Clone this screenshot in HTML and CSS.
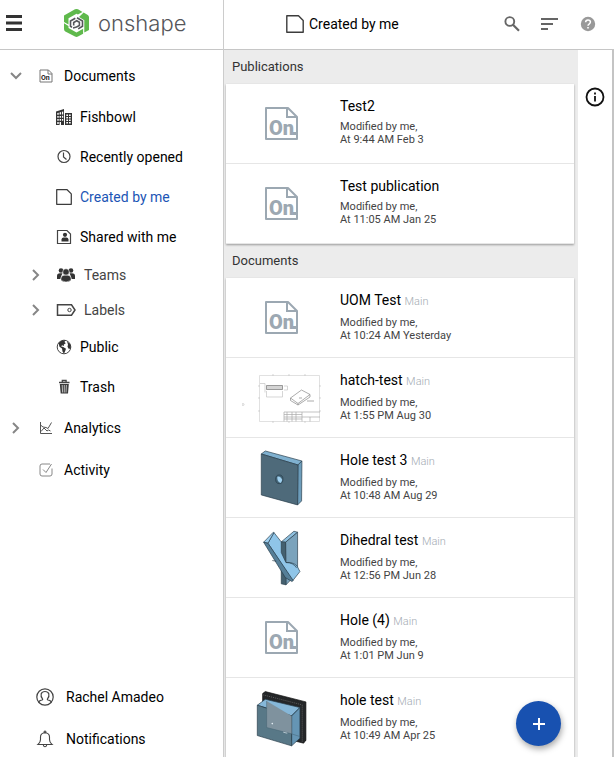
FILE: index.html
```html
<!DOCTYPE html>
<html lang="en">
<head>
<meta charset="utf-8">
<meta name="viewport" content="width=device-width, initial-scale=1">
<title>Onshape - Created by me</title>
<link rel="stylesheet" href="styles.css">
</head>
<body>
<svg class="sprite" aria-hidden="true">
  <symbol id="chevron" viewBox="0 0 16 16"><path d="M5 3l5 5-5 5" fill="none" stroke="#868686" stroke-width="2"/></symbol>
  <symbol id="page" viewBox="0 0 18 18"><path d="M.8.8h11.700l4.700 4.700v11.700H.8z" fill="none" stroke="#3c3c3c" stroke-width="1.400" stroke-linejoin="round"/></symbol>
  <symbol id="on-doc" viewBox="0 0 80 60">
    <path d="M24 14h22l9 9v22H24z" fill="none" stroke="#9ca8b2" stroke-width="2" stroke-linejoin="round"/>
    <path d="M45 14v9h10" fill="none" stroke="#9ca8b2" stroke-width="2"/>
    <text x="27" y="41" class="on-text">On</text>
    <path d="M51 39.500h4" stroke="#9ca8b2" stroke-width="3"/>
  </symbol>
</svg>
<div class="app">
  <aside class="sidebar">
    <header class="brand">
      <button class="icon-button menu" type="button" aria-label="Menu">
        <svg width="16" height="16" viewBox="0 0 16 16"><path d="M0 1.500h16M0 8h16M0 14.500h16" stroke="#333" stroke-width="2.800"/></svg>
      </button>
      <a class="logo" href="#">
        <svg width="25" height="29" viewBox="0 0 25 29">
          <g fill="#5fb94c">
            <path d="M0 6.500L11 .3q1.500-.6 3 0l4.500 2.600-4.600 2.700-1.400-.8L4.500 9.300v6.200L0 12.900z"/>
            <path d="M19.600 3.600l4.200 2.400q1.200.8 1.200 2.300v12.600l-4.700 2.700V11.300l-5.300-3.200z"/>
            <path d="M0 14.300l4.500 2.600v2l8 4.600 6.600-3.700v4.900l-5.100 2.900q-1.500.6-3 0L1.300 22.400Q0 21.600 0 20z"/>
          </g>
          <path d="M8 18.300l-1.500-.9V12l4.800-2.800M13 8.800l5.500 3.200v5.300l-4.300 2.600M9.700 16.500v-3l3-1.800 2.700 1.600v3.200L12.500 18l-3.500 1" fill="none" stroke="#55565a" stroke-width="1.600"/>
        </svg>
        <span class="wordmark">onshape</span>
      </a>
    </header>
    <nav class="nav" aria-label="Library">
      <a class="item top" href="#">
        <svg class="chev open" width="16" height="16"><use href="#chevron"/></svg>
        <svg width="16" height="16" viewBox="0 0 16 16"><path d="M2 2h8.500L14 5.500V14H2zM10 2v4h4" fill="none" stroke="#777"/><text x="3" y="12" class="on-small">On</text></svg>
        <span>Documents</span>
      </a>
      <a class="item sub" href="#">
        <svg width="16" height="16" viewBox="0 0 16 16"><path fill-rule="evenodd" d="M0 2.500L8 0v16H0zM1.300 4v1.800h1.400V3.700zM3.600 3.400v2.200h1.400V3zM5.900 2.800v2.600h1.300v-3zM1.300 7v1.800h1.400V7zM3.600 7v1.800H5V7zM5.900 6.800v2h1.300v-2zM1.300 10v1.800h1.400V10zM3.600 10v1.800H5V10zM5.900 10v1.800h1.300V10zM1.300 13v2h1.400v-2zM3.600 13v3H5v-3zM9 4h7v12H9zM10.300 5.500v1.400h1.700V5.500zM13 5.500v1.400h1.700V5.500zM10.300 8v1.400h1.700V8zM13 8v1.400h1.700V8zM10.300 10.500v1.400h1.700v-1.400zM13 10.500v1.400h1.700v-1.400zM10.300 13v1.400h1.700V13zM13 13v1.400h1.700V13z" fill="#333"/></svg>
        <span>Fishbowl</span>
      </a>
      <a class="item sub" href="#">
        <svg width="16" height="16" viewBox="0 0 16 16"><circle cx="8" cy="7.500" r="6" fill="none" stroke="#444" stroke-width="1.200"/><path d="M7.500 3.500V8l3 2.500" fill="none" stroke="#444" stroke-width="1.200"/></svg>
        <span>Recently opened</span>
      </a>
      <a class="item sub current" href="#" aria-current="page">
        <svg width="16" height="16"><use href="#page"/></svg>
        <span>Created by me</span>
      </a>
      <a class="item sub" href="#">
        <svg width="16" height="16" viewBox="0 0 16 16"><path d="M1.500 1.500h9.500L14.500 5v9.500h-13z" fill="none" stroke="#444" stroke-width="1.200"/><circle cx="9" cy="5.800" r="2.100" fill="#333"/><path d="M5.500 12.500V10.500q.2-1.800 2-2h3q1.800.2 2 2v2z" fill="#333"/></svg>
        <span>Shared with me</span>
      </a>
      <a class="item group" href="#">
        <svg class="chev" width="16" height="16"><use href="#chevron"/></svg>
        <svg width="20" height="16" viewBox="0 0 20 16"><g fill="#333"><circle cx="5" cy="3.500" r="2.300"/><circle cx="15" cy="3.500" r="2.300"/><path d="M1 12V9q0-2.800 3-2.800h2.500L5 9.500 4.500 12zM19 12V9q0-2.800-3-2.800h-2.500L15 9.500l.5 2.500z"/><circle cx="10" cy="5" r="3.300" stroke="#fff" stroke-width=".6"/><path d="M5 13.500V11q.3-2.600 3-2.800h4q2.700.2 3 2.800v2.500Q10 16.500 5 13.500z" stroke="#fff" stroke-width=".5"/></g></svg>
        <span>Teams</span>
      </a>
      <a class="item group" href="#">
        <svg class="chev" width="16" height="16"><use href="#chevron"/></svg>
        <svg width="20" height="16" viewBox="0 0 20 16"><path d="M1.500 2.800h14L19 8l-3.500 5.200h-14z" fill="none" stroke="#444" stroke-width="1.500"/><circle cx="13.500" cy="8" r="1.700" fill="none" stroke="#444"/></svg>
        <span>Labels</span>
      </a>
      <a class="item sub" href="#">
        <svg width="16" height="16" viewBox="0 0 16 16"><circle cx="8" cy="8" r="6.800" fill="#fff" stroke="#444"/><path d="M2.500 4Q5 1 9.500 1.300L8.500 3l1.300 1.200-2 1.300.2 1.500-2-.8-.8 1.200 2 .5 2.800 1.800-.8 2.200-1.200 2.800-1.500-2.300L6 9.500 3.500 7.800zM11 2.300l3.300 3.200.5 3-1.800 1.700-1.500-2.500.5-2z" fill="#333"/></svg>
        <span>Public</span>
      </a>
      <a class="item sub" href="#">
        <svg width="16" height="16" viewBox="0 0 16 16"><path d="M3 3.500h10.500M6.300 3V1.500h3.800V3" fill="none" stroke="#444" stroke-width="1.300"/><path d="M3.800 5h9l-.8 9.500H4.700z" fill="#3a3a3a"/><path d="M6.200 6l.4 7.500M8.300 6v7.500M10.400 6L10 13.500" stroke="#bbb"/></svg>
        <span>Trash</span>
      </a>
      <a class="item top" href="#">
        <svg class="chev" width="16" height="16"><use href="#chevron"/></svg>
        <svg width="16" height="16" viewBox="0 0 16 16"><path d="M2.500 2v11.500H14" fill="none" stroke="#555"/><path d="M2.500 5l2.500 2 3 .5 2 1 3.500-6M3 11.500l3-3.500 3 3 1.500-1 2 1" fill="none" stroke="#555"/></svg>
        <span>Analytics</span>
      </a>
      <a class="item top" href="#">
        <span class="chev-space"></span>
        <svg width="16" height="16" viewBox="0 0 16 16"><path d="M12 2H4Q2 2 2 4v8q0 2 2 2h8q2 0 2-2V6.500M5 7.500L8 10.500l5.500-8.500" fill="none" stroke="#888"/></svg>
        <span>Activity</span>
      </a>
    </nav>
    <div class="account">
      <a class="item" href="#">
        <svg width="18" height="18" viewBox="0 0 18 18"><circle cx="9" cy="9" r="8.200" fill="none" stroke="#444" stroke-width="1.200"/><path d="M3 15v-1.500q1-1.200 3-1.500 1-.3.500-1.200Q4.500 8.500 5.200 5.800 6 3.500 9 3.500t3.800 2.300q.7 2.700-1.300 5-.5.900.5 1.200 2 .3 3 1.500V15" fill="none" stroke="#444" stroke-width="1.200"/></svg>
        <span>Rachel Amadeo</span>
      </a>
      <a class="item" href="#">
        <svg width="18" height="18" viewBox="0 0 18 18"><path d="M2 14.500h14q-2.500-2-2.500-5V7q0-4-4.500-4.300Q4.500 3 4.500 7v2.500q0 3-2.500 5zM8 2.500Q8 1 9 1t1 1.500M7.300 15q.4 1.800 1.700 1.800t1.700-1.800" fill="none" stroke="#444" stroke-width="1.100"/></svg>
        <span>Notifications</span>
      </a>
    </div>
  </aside>

  <main class="main">
    <header class="bar">
      <h1 class="page-title"><svg width="18" height="18"><use href="#page"/></svg>Created by me</h1>
      <div class="actions">
        <button class="icon-button" type="button" aria-label="Search"><svg width="18" height="18" viewBox="0 0 18 18"><circle cx="6.800" cy="6.500" r="4.400" fill="none" stroke="#666" stroke-width="1.900"/><path d="M10 9.700l6 6" stroke="#666" stroke-width="2.200"/></svg></button>
        <button class="icon-button" type="button" aria-label="Sort"><svg width="18" height="18" viewBox="0 0 18 18"><path d="M0 4h17M0 9h12M0 14h7" stroke="#333" stroke-width="1.700"/></svg></button>
        <button class="icon-button" type="button" aria-label="Help"><svg width="16" height="16" viewBox="0 0 16 16"><circle cx="8" cy="8" r="7.200" fill="#999"/><path d="M5.600 6.300Q5.700 3.900 8 3.900t2.400 2Q10.400 7 9.300 7.800 8 8.600 8 9.800" fill="none" stroke="#fff" stroke-width="1.500"/><path d="M7.200 10.900h1.600v1.500H7.200z" fill="#fff"/></svg></button>
      </div>
    </header>
    <div class="content">
      <div class="list">
        <section>
          <h2 class="section-title">Publications</h2>
          <div class="cards">
            <a class="card" href="#">
              <svg class="thumb" viewBox="0 0 80 60"><use href="#on-doc"/></svg>
              <div><h3 class="name">Test2</h3><p class="meta">Modified by me,<br>At 9:44 AM Feb 3</p></div>
            </a>
            <a class="card" href="#">
              <svg class="thumb" viewBox="0 0 80 60"><use href="#on-doc"/></svg>
              <div><h3 class="name">Test publication</h3><p class="meta">Modified by me,<br>At 11:05 AM Jan 25</p></div>
            </a>
          </div>
        </section>
        <section>
          <h2 class="section-title">Documents</h2>
          <div class="cards">
            <a class="card" href="#">
              <svg class="thumb" viewBox="0 0 80 60"><use href="#on-doc"/></svg>
              <div><h3 class="name">UOM Test <small>Main</small></h3><p class="meta">Modified by me,<br>At 10:24 AM Yesterday</p></div>
            </a>
            <a class="card" href="#">
              <svg class="thumb" viewBox="0 0 80 60">
                <g fill="none" stroke="#c4c4c4" stroke-width=".7">
                  <path d="M17.500 7.500h60v46h-60z" stroke="#d4d4d4"/>
                  <path d="M31 6v2M47 6v2M63 6v2M31 53v2M47 53v2M63 53v2M16 18h2M16 30h2M16 43h2M77 18h2M77 30h2M77 43h2"/>
                  <circle cx="1" cy="36.500" r="1"/>
                  <path d="M24.500 23v6h16v-6M42 18h3.500v4H42M18 15.500h5v9"/>
                  <path d="M42 44h36M42 46.500h18M42 49h36M42 51h18M45 44v9.500M50 44v9.500M54 44v9.500M60 44v9.500M68 49v4.500M42 44v9.500" stroke="#aaa"/>
                </g>
                <path d="M24.500 17.500h16v4h-16z" fill="#d4d4d4" stroke="#777" stroke-width=".7"/>
                <path d="M48.500 30l11-8 8.500 4.500-12 9zM48.500 30v2.500l7.500 4.500 12-8v-2.500M56 35.500V37M57 30h3M65 33h7" fill="none" stroke="#888" stroke-width=".7"/>
              </svg>
              <div><h3 class="name">hatch-test <small>Main</small></h3><p class="meta">Modified by me,<br>At 1:55 PM Aug 30</p></div>
            </a>
            <a class="card" href="#">
              <svg class="thumb" viewBox="0 0 80 60">
                <g transform="translate(-18 -12) scale(.333)" stroke="#263b48" stroke-width="2" stroke-linejoin="round">
                  <path d="M112 54l12-9 110 30-12 12z" fill="#7fb0cf"/>
                  <path d="M222 87l12-12-1 120-12 12z" fill="#6d9dbb"/>
                  <path d="M112 54l110 33-1 120-109-30z" fill="#4e6a7a"/>
                  <ellipse cx="166" cy="130" rx="11" ry="13" fill="#456577"/>
                  <path d="M160 122q10-3 15 10l-4 9q-12-3-11-19z" fill="#9fd0ef" stroke="none"/>
                </g>
              </svg>
              <div><h3 class="name">Hole test 3 <small>Main</small></h3><p class="meta">Modified by me,<br>At 10:48 AM Aug 29</p></div>
            </a>
            <a class="card" href="#">
              <svg class="thumb" viewBox="0 0 80 60">
                <g transform="translate(-18 -92) scale(.333)" stroke="#263b48" stroke-width="2" stroke-linejoin="round">
                  <path d="M172 318l38-32 11 3-36 30z" fill="#8fc0df"/>
                  <path d="M185 319l36-30v122l-35 36z" fill="#7ba3bc"/>
                  <path d="M172 318l13 1 1 128-14-3z" fill="#44606f"/>
                  <path d="M132 322l18-32 22 28v32l14 30q20-2 33 10l9 17-22 28z" fill="#8fc5e8"/>
                  <path d="M119 319l29-30 2 1-18 32z" fill="#9dcff0"/>
                  <path d="M119 319l13 3 76 112-4 3-20-12z" fill="#567f98"/>
                  <path d="M186 380q22 0 32 16M145 374l12 2" fill="none"/>
                </g>
              </svg>
              <div><h3 class="name">Dihedral test <small>Main</small></h3><p class="meta">Modified by me,<br>At 12:56 PM Jun 28</p></div>
            </a>
            <a class="card" href="#">
              <svg class="thumb" viewBox="0 0 80 60"><use href="#on-doc"/></svg>
              <div><h3 class="name">Hole (4) <small>Main</small></h3><p class="meta">Modified by me,<br>At 1:01 PM Jun 9</p></div>
            </a>
            <a class="card" href="#">
              <svg class="thumb" viewBox="0 0 80 60">
                <g transform="translate(-18 -87) scale(.333)" stroke-linejoin="round">
                  <path d="M116 278l8-6 122 31v115l-7 9-123-31z" fill="#242628" stroke="#111" stroke-width="2"/>
                  <path d="M118 282l117 30v112" fill="none" stroke="#777" stroke-width="2" stroke-dasharray="3 3"/>
                  <path d="M100 313l24-18 104 25-25 25z" fill="#86b7d8" stroke="#263b48" stroke-width="2"/>
                  <path d="M203 345l25-25v92l-25 23z" fill="#6595b4" stroke="#263b48" stroke-width="2"/>
                  <path d="M100 313l103 32v90l-103-31z" fill="#587887" stroke="#263b48" stroke-width="2"/>
                  <path d="M128 300l75 45v54l-75-19z" fill="#7f929e"/>
                  <path d="M128 300v80l75 19 25 8" fill="none" stroke="#456373" stroke-width="1.500"/>
                  <circle cx="145" cy="368" r="2.500" fill="#e3edf3"/><path d="M178 394l12 3" stroke="#e3edf3" stroke-width="2"/>
                </g>
              </svg>
              <div><h3 class="name">hole test <small>Main</small></h3><p class="meta">Modified by me,<br>At 10:49 AM Apr 25</p></div>
            </a>
          </div>
        </section>
        <button class="create" type="button" aria-label="Create"><svg width="12" height="12" viewBox="0 0 12 12"><path d="M6 0v12M0 6h12" stroke="#fff" stroke-width="2"/></svg></button>
      </div>
      <aside class="rail">
        <button class="icon-button" type="button" aria-label="Details"><svg width="20" height="20" viewBox="0 0 20 20"><circle cx="10" cy="10" r="8.500" fill="none" stroke="#111" stroke-width="1.800"/><path d="M10 9v5.500M10 5.500v2" stroke="#111" stroke-width="1.800"/></svg></button>
      </aside>
    </div>
  </main>
</div>
</body>
</html>
```
FILE: styles.css
```css
* {
  box-sizing: border-box;
}

body {
  margin: 0;
  font-family: Roboto, "Liberation Sans", sans-serif;
  font-size: 14px;
  line-height: 18px;
  color: #000;
  background: #fff;
}

a {
  color: inherit;
  text-decoration: none;
}

h1, h2, h3, p {
  margin: 0;
  font-weight: 400;
}

svg {
  display: block;
  flex: none;
}

.sprite {
  display: none;
}

.app {
  display: grid;
  grid-template-columns: 224px minmax(0, 1fr);
  height: 100vh;
  overflow: hidden;
}

.icon-button {
  display: flex;
  align-items: center;
  justify-content: center;
  padding: 0;
  border: 0;
  background: none;
}

/* Sidebar */
.sidebar {
  display: flex;
  flex-direction: column;
  border-right: 1px solid #ccc;
}

.brand,
.bar {
  display: flex;
  flex: none;
  align-items: center;
  height: 50px;
  border-bottom: 1px solid #c6c6c6;
}

.brand {
  gap: 42px;
  padding: 0 0 3px 6px;
}

.logo {
  display: flex;
  align-items: center;
  gap: 9px;
}

.wordmark {
  font-family: Inter, sans-serif;
  font-size: 22px;
  font-weight: 300;
  line-height: 26px;
  color: #55565a;
}

.nav {
  flex: 1;
  padding-top: 5px;
}

.item {
  display: flex;
  align-items: center;
}

.top {
  height: 42px;
  gap: 10px;
  padding-left: 8px;
}

.sub {
  height: 40px;
  gap: 8px;
  padding-left: 56px;
}

.group {
  height: 35px;
  gap: 8px;
  padding-left: 28px;
  color: #444;
}

.chev,
.chev-space {
  width: 16px;
  margin-right: 4px;
}

.open {
  transform: rotate(90deg);
}

.current {
  color: #1b55b5;
}

.account {
  display: flex;
  flex-direction: column;
  gap: 6px;
}

.account .item {
  height: 36px;
  gap: 12px;
  padding-left: 36px;
}

/* Main column */
.main {
  display: flex;
  flex-direction: column;
  min-height: 0;
}

.bar {
  justify-content: space-between;
  padding: 0 7px 2px 62px;
}

.page-title {
  display: flex;
  align-items: center;
  gap: 5px;
  font-size: 14px;
}

.actions {
  display: flex;
}

.actions .icon-button {
  width: 38px;
  height: 38px;
}

.content {
  display: flex;
  flex: 1;
  min-height: 0;
}

.list {
  position: relative;
  flex: 1;
  padding-right: 4px;
  overflow: hidden;
  background: #ececec;
}

.section-title {
  padding: 8px;
  font-size: 13px;
  color: #333;
}

.cards {
  margin-left: 2px;
  background: #fff;
  box-shadow: 0 1px 2px rgba(0, 0, 0, .35);
}

.card {
  display: flex;
  gap: 18px;
  height: 80px;
  padding: 10px 16px;
  border-bottom: 1px solid #e6e6e6;
}

.thumb {
  width: 80px;
  height: 60px;
}

.name {
  padding: 3px 0 5px;
  font-size: 14px;
}

.name small {
  font-size: 11px;
  font-weight: 300;
  color: #a3abb3;
}

.meta {
  font-size: 11px;
  line-height: 13px;
  color: #444;
}

.on-text {
  font: 900 20px Roboto, sans-serif;
  fill: #9ca8b2;
}

.on-small {
  font: 700 7px Roboto, sans-serif;
  fill: #222;
}

.create {
  position: absolute;
  right: 17px;
  bottom: 11px;
  display: flex;
  align-items: center;
  justify-content: center;
  width: 45px;
  height: 45px;
  padding: 0;
  border: 0;
  border-radius: 50%;
  background: #1851b0;
  box-shadow: 1px 3px 6px rgba(0, 0, 0, .35);
}

.rail {
  display: flex;
  flex: none;
  align-items: flex-start;
  justify-content: center;
  width: 36px;
  padding-top: 37px;
  border-right: 2px solid #c4c4c4;
}
```
